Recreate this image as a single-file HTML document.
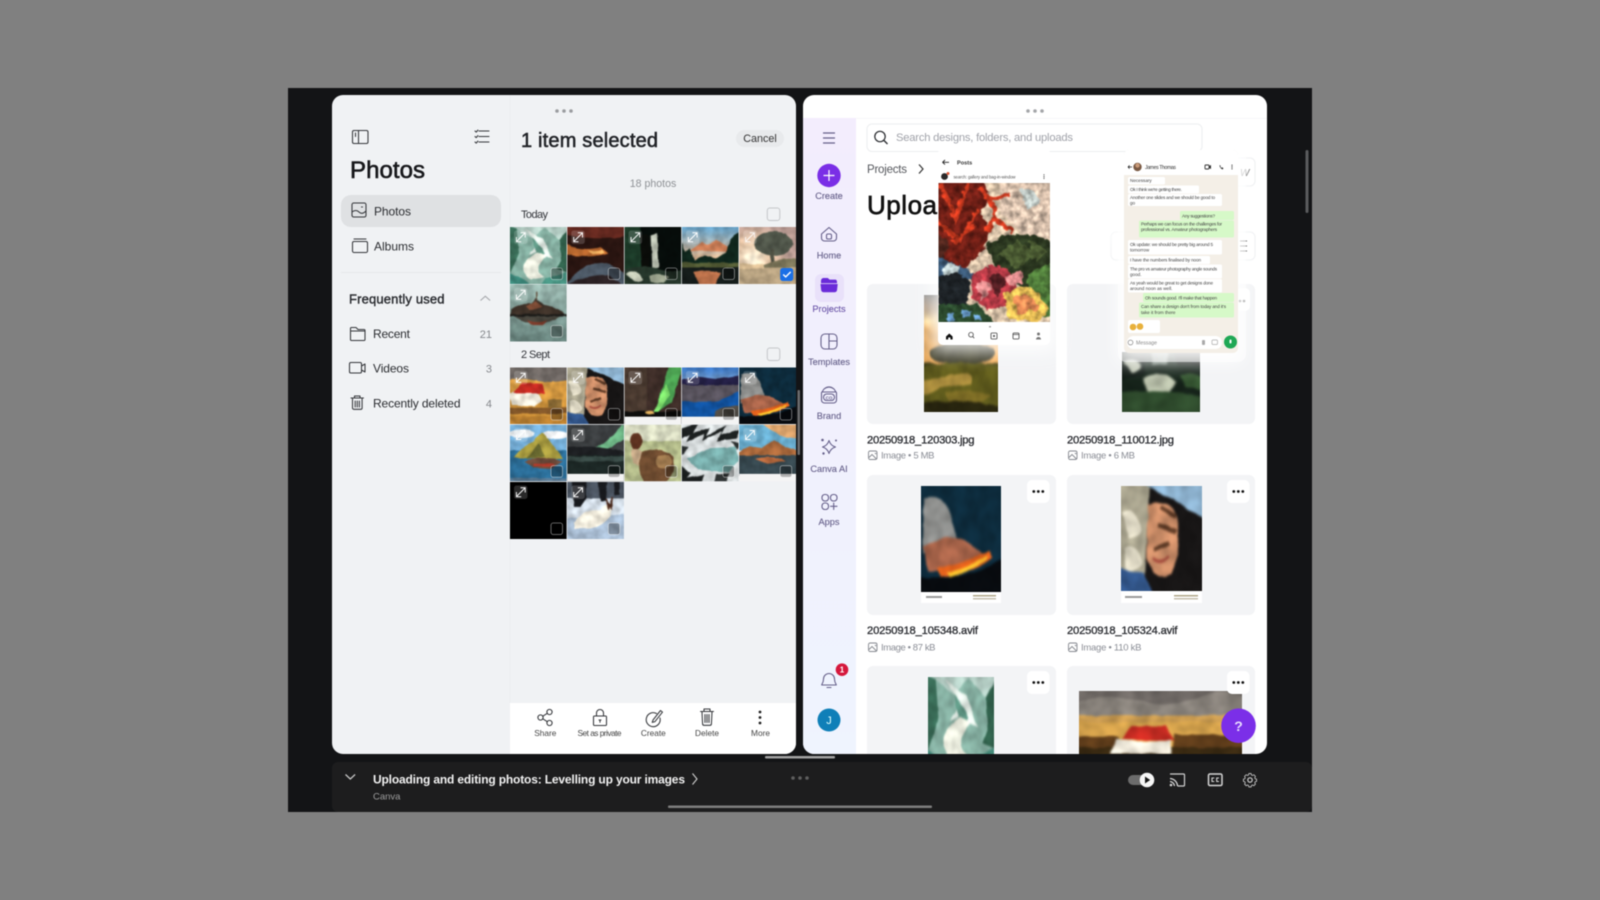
<!DOCTYPE html>
<html lang="en">
<head>
<meta charset="utf-8">
<title>Split screen: Photos and Canva</title>
<style>
html,body{margin:0;padding:0;width:1600px;height:900px;overflow:hidden;background:#808080}
svg{position:absolute;left:0;top:0;display:block;filter:blur(.4px)}
text{font-family:"Liberation Sans",sans-serif}
.t{fill:#2b2d31;font-size:12px}
.lab{font-size:9.2px;fill:#66608a;text-anchor:middle;stroke:#66608a;stroke-width:.12}
.tool{font-size:8.3px;fill:#444;text-anchor:middle}
.meta{font-size:9.5px;fill:#8b8e96}
.fn{font-size:11.2px;fill:#2c2e33;stroke:#2c2e33;stroke-width:.32}
.wa{font-size:4.6px;fill:#444}
.ic{fill:none;stroke:#35373b;stroke-width:1.05;stroke-linecap:round;stroke-linejoin:round}
.cv{fill:none;stroke:#66608a;stroke-width:1.1;stroke-linecap:round;stroke-linejoin:round}
.wh{fill:none;stroke:#d0d0d0;stroke-width:1.2;stroke-linecap:round;stroke-linejoin:round}
</style>
</head>
<body>
<svg width="1600" height="900" viewBox="0 0 1600 900" xmlns="http://www.w3.org/2000/svg">
<defs>
<filter id="s" x="-5%" y="-5%" width="110%" height="110%" color-interpolation-filters="sRGB">
<feTurbulence type="fractalNoise" baseFrequency=".07" numOctaves="2" seed="4" result="n"/>
<feDisplacementMap in="SourceGraphic" in2="n" scale="4" xChannelSelector="R" yChannelSelector="G" result="d"/>
<feColorMatrix in="n" type="matrix" values="1 0 0 0 0 1 0 0 0 0 1 0 0 0 0 0 0 0 0 1" result="g"/>
<feComposite in="d" in2="g" operator="arithmetic" k1=".45" k2=".78" k3="0" k4="0" result="t"/>
<feGaussianBlur in="t" stdDeviation="1.1"/>
</filter>
<filter id="pa" x="-5%" y="-5%" width="110%" height="110%" color-interpolation-filters="sRGB">
<feTurbulence type="fractalNoise" baseFrequency=".16" numOctaves="3" seed="9" result="n"/>
<feDisplacementMap in="SourceGraphic" in2="n" scale="7" xChannelSelector="R" yChannelSelector="G" result="d"/>
<feColorMatrix in="n" type="matrix" values="1 0 0 0 0 1 0 0 0 0 1 0 0 0 0 0 0 0 0 1" result="g"/>
<feComposite in="d" in2="g" operator="arithmetic" k1="1" k2=".5" k3="0" k4="0" result="t"/>
<feGaussianBlur in="t" stdDeviation=".45"/>
</filter>
<filter id="gl" x="-30%" y="-30%" width="160%" height="160%"><feGaussianBlur stdDeviation="9"/></filter>
<clipPath id="cl"><rect x="332" y="95" width="464" height="659" rx="11"/></clipPath>
<clipPath id="cr"><rect x="803" y="95" width="464" height="659" rx="11"/></clipPath>
<linearGradient id="side" x1="0" y1="0" x2="0" y2="1"><stop offset="0" stop-color="#f3edfd"/><stop offset="1" stop-color="#eff4fe"/></linearGradient>
<linearGradient id="sky1" x1="0" y1="0" x2="0" y2="1"><stop offset="0" stop-color="#5d9fc9"/><stop offset="1" stop-color="#e3b48a"/></linearGradient>
<radialGradient id="glowsun" cx=".25" cy=".55" r=".6"><stop offset="0" stop-color="#fff6df"/><stop offset=".5" stop-color="#e8c6a6"/><stop offset="1" stop-color="#b89a92"/></radialGradient>
<linearGradient id="fld" x1="0" y1="0" x2="0" y2="1"><stop offset="0" stop-color="#dca14a"/><stop offset="1" stop-color="#c58a33"/></linearGradient>
<linearGradient id="sky2" x1="0" y1="0" x2="0" y2="1"><stop offset="0" stop-color="#2f6fc2"/><stop offset="1" stop-color="#7fa2c8"/></linearGradient>
<linearGradient id="wat" x1="0" y1="0" x2="0" y2="1"><stop offset="0" stop-color="#9bb8b0"/><stop offset="1" stop-color="#65807a"/></linearGradient>
<linearGradient id="e2g" x1="0" y1="0" x2="0" y2="1"><stop offset="0" stop-color="#75797e"/><stop offset=".25" stop-color="#b59c82"/><stop offset=".42" stop-color="#f6d595"/><stop offset=".55" stop-color="#e8a85a"/></linearGradient>

<symbol id="a" viewBox="0 0 100 100" preserveAspectRatio="none"><g filter="url(#s)" transform="translate(-3 -3) scale(1.06)">
<rect width="100" height="100" fill="#b4cdc4"/>
<path d="M5 0L40 22 60 4 92 28 100 60 100 100 0 100 0 40Z" fill="#86b0a2"/>
<path d="M26 6L50 30 34 50 50 42 74 56 58 22Z" fill="#dce6df"/>
<path d="M40 20L62 46 48 52Z" fill="#5d9482"/>
<path d="M48 44C26 58 14 74 38 90L60 86C42 72 52 60 66 50Z" fill="#e6e8da"/>
<path d="M0 0L14 6 18 48 8 68 0 86Z" fill="#3a6d58"/>
<path d="M100 4L86 24 88 60 80 72 100 80Z" fill="#2f5d49"/>
<path d="M0 78L26 90 38 100 0 100Z" fill="#3f8c7e"/>
<path d="M62 88L100 78 100 100 52 100Z" fill="#47907f"/>
</g></symbol>

<symbol id="b" viewBox="0 0 100 100" preserveAspectRatio="none"><g filter="url(#s)" transform="translate(-3 -3) scale(1.06)">
<rect width="100" height="100" fill="#2a1511"/>
<path d="M0 0H100V18Q60 26 0 16Z" fill="#63281f"/>
<path d="M0 32Q30 44 58 36L72 46Q40 56 0 48Z" fill="#b9682f"/>
<path d="M38 42Q52 44 62 40L66 46 44 48Z" fill="#f4b262"/>
<path d="M0 100Q22 64 60 62Q88 66 100 86V100Z" fill="#4c5865"/>
<path d="M0 100Q30 82 70 82L100 100Z" fill="#2c2224"/>
</g></symbol>

<symbol id="c" viewBox="0 0 100 100" preserveAspectRatio="none"><g filter="url(#s)" transform="translate(-3 -3) scale(1.06)">
<rect width="100" height="100" fill="#060c0a"/>
<path d="M0 0H28L32 68 0 78Z" fill="#1c3a28"/>
<path d="M28 18Q40 10 46 20L44 70 32 72Z" fill="#0a0c09"/>
<path d="M47 16L57 13 60 70 49 72Z" fill="#b9bfb0"/>
<path d="M0 74Q30 64 60 72T100 74V100H0Z" fill="#25352a"/>
<path d="M4 80Q16 70 28 82T20 94Z" fill="#c8ceba"/>
<path d="M44 84Q60 76 78 86L68 96 46 94Z" fill="#9aa28c"/>
</g></symbol>

<symbol id="c2" viewBox="0 0 78 60" preserveAspectRatio="none"><g filter="url(#s)" transform="translate(-3 -3) scale(1.1)">
<rect width="78" height="60" fill="#16231a"/>
<path d="M28 0H46L44 14 30 14Z" fill="#7c8a80"/>
<path d="M0 0H24V22L0 30Z" fill="#0e1712"/>
<path d="M50 0H78V16L54 14Z" fill="#0a100c"/>
<path d="M4 12Q12 6 18 12T12 22Z" fill="#c2c8b6"/>
<path d="M22 26Q42 18 52 30L44 42 26 38Z" fill="#b8bfa9"/>
<path d="M0 40Q30 34 78 44V60H0Z" fill="#2e4a2c"/>
<path d="M56 24Q68 20 78 28V38L60 34Z" fill="#385a34"/>
</g></symbol>

<symbol id="d" viewBox="0 0 100 100" preserveAspectRatio="none"><g filter="url(#s)" transform="translate(-3 -3) scale(1.06)">
<rect width="100" height="60" fill="url(#sky1)"/>
<path d="M15 42L35 28 48 32 60 24 80 36 90 44Z" fill="#cd7f58"/>
<path d="M0 25L8 45 16 38 24 58 40 50 60 55 75 45 85 22 92 15 100 8V65H0Z" fill="#0f261c"/>
<rect y="62" width="100" height="8" fill="#525a34"/>
<rect y="70" width="100" height="30" fill="#151c1a"/>
<path d="M22 78Q45 72 68 78L58 100H32Z" fill="#b9704a"/>
</g></symbol>

<symbol id="e" viewBox="0 0 100 100" preserveAspectRatio="none"><g filter="url(#s)" transform="translate(-3 -3) scale(1.06)">
<rect width="100" height="100" fill="url(#glowsun)"/>
<ellipse cx="60" cy="30" rx="32" ry="20" fill="#50564a"/>
<rect x="55" y="40" width="7" height="24" fill="#4a4b3f"/>
<path d="M44 66Q72 52 100 56V72H44Z" fill="#7a7458"/>
<rect y="70" width="100" height="30" fill="#b5a07f"/>
<path d="M0 64H44V72H0Z" fill="#d9bd94"/>
</g></symbol>

<symbol id="e2" viewBox="0 0 100 100" preserveAspectRatio="none"><g filter="url(#s)" transform="translate(-3 -3) scale(1.06)">
<rect width="100" height="100" fill="#3f3d16"/>
<rect width="100" height="58" fill="url(#e2g)"/>
<ellipse cx="52" cy="50" rx="42" ry="9" fill="#3c3b28"/>
<path d="M0 62Q35 54 100 60V100H0Z" fill="#5e5a1c"/>
<path d="M0 72L52 66Q66 66 64 74L24 78 0 84Z" fill="#a78a3c"/>
<path d="M30 82Q60 76 88 84L70 92 36 90Z" fill="#7a6a24"/>
<path d="M0 90Q50 86 100 92V100H0Z" fill="#28250f"/>
</g></symbol>

<symbol id="f" viewBox="0 0 100 100" preserveAspectRatio="none"><g filter="url(#s)" transform="translate(-3 -3) scale(1.06)">
<rect width="100" height="100" fill="url(#wat)"/>
<path d="M4 44Q22 32 38 34L46 26 58 36Q82 40 96 54H4Z" fill="#3d3128"/>
<path d="M30 38L46 30 56 40 36 46Z" fill="#7a4a34"/>
<rect x="47" y="14" width="2.500" height="14" fill="#5a4a3a"/>
<rect y="52" width="100" height="4" fill="#1d1c19"/>
<path d="M10 56Q50 80 86 56Z" fill="#3a2e26" opacity=".8"/>
<path d="M32 62Q50 68 64 62L58 70H38Z" fill="#7a3a2a"/>
</g></symbol>

<symbol id="g" viewBox="0 0 100 100" preserveAspectRatio="none"><g filter="url(#s)" transform="translate(-3 -3) scale(1.06)">
<rect width="100" height="100" fill="url(#fld)"/>
<path d="M0 0H100V24Q70 30 40 24T0 26Z" fill="#6f6864"/>
<path d="M0 46L5 66 44 68 56 58 48 42H16Z" fill="#efe9da"/>
<path d="M8 46L22 28 56 30 62 46Z" fill="#c42b22"/>
<path d="M0 70H100V80H0Z" fill="#7e5428"/>
<rect y="84" width="100" height="16" fill="#b97f30"/>
<path d="M66 56H90V70H66Z" fill="#8a6a34"/>
</g></symbol>

<symbol id="g2" viewBox="0 0 163 90" preserveAspectRatio="none"><g filter="url(#s)" transform="translate(-4 -3) scale(1.06)">
<rect width="163" height="90" fill="#d7a44d"/>
<path d="M0 0H163V14Q120 26 60 22T0 26Z" fill="#6e6864"/>
<path d="M0 14Q30 4 60 12T118 8 163 12V24Q100 28 0 26Z" fill="#857f78"/>
<rect y="26" width="163" height="6" fill="#c89a50"/>
<path d="M0 46H40L44 62 0 70ZM94 44H163V70H92Z" fill="#5e3c1a"/>
<path d="M0 56H163V90H0Z" fill="#3a2a12"/>
<path d="M34 62L38 48 60 50 90 50 92 62Z" fill="#efe9da"/>
<path d="M44 48L52 36 86 36 94 50Z" fill="#c42b22"/>
</g></symbol>

<symbol id="h" viewBox="0 0 100 100" preserveAspectRatio="none"><g filter="url(#s)" transform="translate(-3 -3) scale(1.06)">
<rect width="100" height="100" fill="#171515"/>
<path d="M0 0H36L30 100H0Z" fill="#a9a48e"/>
<path d="M4 28Q16 20 24 34T12 50ZM6 60Q18 52 26 66T8 78Z" fill="#e2dcc7"/>
<path d="M0 76L30 82 40 100H0Z" fill="#34598f"/>
<path d="M28 0H100V32L60 14Z" fill="#8db2cf"/>
<path d="M34 20Q60 12 68 32Q74 58 62 82Q42 90 33 68Z" fill="#c98b66"/>
<path d="M46 38L68 44M42 60L60 54M50 22L66 30" stroke="#5a3824" stroke-width="4" fill="none"/>
<path d="M40 68Q50 74 58 66" stroke="#a24a3c" stroke-width="3" fill="none"/>
</g></symbol>

<symbol id="i" viewBox="0 0 100 100" preserveAspectRatio="none"><g filter="url(#s)" transform="translate(-3 -3) scale(1.06)">
<rect width="100" height="100" fill="#3c2c27"/>
<rect width="40" height="88" fill="#4a3a30"/>
<path d="M76 0L100 0 82 60 50 82 62 50Z" fill="#4da453"/>
<path d="M72 30L78 48 60 76 52 76Z" fill="#7ee06c"/>
<rect y="76" width="100" height="12" fill="#0d0d0c"/>
<ellipse cx="45" cy="78" rx="8" ry="3" fill="#e5b35f"/>
</g><rect y="87" width="100" height="13" fill="#f4f4f4"/></symbol>

<symbol id="j" viewBox="0 0 100 100" preserveAspectRatio="none"><g filter="url(#s)" transform="translate(-3 -3) scale(1.06)">
<rect width="100" height="30" fill="url(#sky2)"/>
<path d="M0 24L30 18 60 22 100 16V34H0Z" fill="#231f44"/>
<path d="M0 32H100V46L60 62 20 62 0 60Z" fill="#57525c"/>
<path d="M0 60L60 60 100 42V88H0Z" fill="#11529f"/>
<path d="M60 74Q80 64 100 68V88H56Z" fill="#4e4a44"/>
</g><rect y="87" width="100" height="13" fill="#f4f4f4"/></symbol>

<symbol id="k" viewBox="0 0 100 100" preserveAspectRatio="none"><g filter="url(#s)" transform="translate(-3 -3) scale(1.06)">
<rect width="100" height="100" fill="#0d2b3c"/>
<path d="M6 14Q28 8 36 26T44 50L30 62 4 64Z" fill="#8d8e8c"/>
<path d="M4 58Q34 42 62 54L80 68 50 80 12 78Z" fill="#a66349"/>
<path d="M22 76Q48 74 84 60L88 66Q58 82 26 84Z" fill="#e0601c"/>
<path d="M34 80Q56 76 82 64L80 68Q56 80 38 84Z" fill="#ffbe2c"/>
<path d="M0 84Q50 88 100 68V100H0Z" fill="#080b0f"/>
</g></symbol>

<symbol id="l" viewBox="0 0 100 100" preserveAspectRatio="none"><g filter="url(#s)" transform="translate(-3 -3) scale(1.06)">
<rect width="100" height="100" fill="#2b6d97"/>
<rect width="100" height="46" fill="#75aed7"/>
<ellipse cx="78" cy="20" rx="22" ry="7" fill="#f4f6f8"/>
<ellipse cx="22" cy="18" rx="22" ry="7" fill="#e8edf0"/>
<path d="M8 58L28 38 42 30 56 16 72 34 92 60Z" fill="#a79a3f"/>
<path d="M30 60L50 34 62 56Z" fill="#6a6a30"/>
<path d="M28 64Q55 52 92 64L70 76 40 74Z" fill="#6c4a3a"/>
<path d="M42 68H76V72H42Z" fill="#b03a2a"/>
<rect y="92" width="100" height="8" fill="#56748c"/>
</g></symbol>

<symbol id="m" viewBox="0 0 100 100" preserveAspectRatio="none"><g filter="url(#s)" transform="translate(-3 -3) scale(1.06)">
<rect width="100" height="100" fill="#3b3e40"/>
<path d="M44 42Q72 34 96 0L100 26 68 44Z" fill="#6fb787"/>
<path d="M0 40Q50 36 100 48V56H0Z" fill="#1d1f22"/>
<rect y="54" width="100" height="34" fill="#1c2725"/>
<path d="M0 56H100V64H0Z" fill="#384945"/>
</g><rect y="87" width="100" height="13" fill="#f4f4f4"/></symbol>

<symbol id="n" viewBox="0 0 100 100" preserveAspectRatio="none"><g filter="url(#s)" transform="translate(-3 -3) scale(1.06)">
<rect width="100" height="100" fill="#b3bb8a"/>
<rect width="100" height="30" fill="#d6d9c0"/>
<path d="M30 50Q60 35 84 56Q90 84 70 100H36Q22 80 30 50Z" fill="#6c4a2f"/>
<ellipse cx="22" cy="30" rx="10" ry="14" fill="#5d3220"/>
<path d="M14 44Q24 42 32 48L26 72 16 66Z" fill="#c1a584"/>
<ellipse cx="68" cy="64" rx="14" ry="11" fill="#a27c50"/>
</g></symbol>

<symbol id="o" viewBox="0 0 100 100" preserveAspectRatio="none"><g filter="url(#s)" transform="translate(-3 -3) scale(1.06)">
<rect width="100" height="100" fill="#d5dadb"/>
<path d="M0 10L30 0 22 16 50 8 44 22 76 4 68 20 100 10 94 26 60 30 70 14 36 30 40 18 10 32 16 20 0 28Z" fill="#1c2020"/>
<path d="M10 60L50 42 92 40 100 62 80 82 30 78Z" fill="#76aaa8"/>
<path d="M0 70L18 84 10 92 40 86 36 100 0 100Z" fill="#1c2020"/>
<path d="M60 86L82 84 76 100 56 100Z" fill="#2c3030"/>
<path d="M0 38L14 40 6 52 0 54ZM84 30L100 34 96 46Z" fill="#2a2e2e"/>
</g></symbol>

<symbol id="p" viewBox="0 0 100 100" preserveAspectRatio="none"><g filter="url(#s)" transform="translate(-3 -3) scale(1.06)">
<rect width="100" height="46" fill="#68abcc"/>
<path d="M40 0H100V26L70 22Z" fill="#d9a26b"/>
<path d="M0 50L20 38 40 42 60 28 80 40 100 46V56H0Z" fill="#a9683b"/>
<rect y="54" width="100" height="34" fill="#36474e"/>
<path d="M30 60Q60 52 80 64L50 68Z" fill="#b5683d"/>
</g><rect y="87" width="100" height="13" fill="#f4f4f4"/></symbol>

<symbol id="q" viewBox="0 0 100 100" preserveAspectRatio="none"><g filter="url(#s)" transform="translate(-3 -3) scale(1.06)">
<rect width="100" height="100" fill="#a9bdd3"/>
<rect width="100" height="32" fill="#49525e"/>
<path d="M0 30H100V56L0 64Z" fill="#d4dee8"/>
<path d="M10 0H34V30L24 44H14ZM54 0H70L66 34H58ZM80 0H90V24H82Z" fill="#181a1e"/>
<path d="M14 70Q30 46 58 50Q66 36 76 44L74 60Q62 76 40 80H16Z" fill="#eee9da"/>
<path d="M66 30L72 46 78 28 76 46Z" fill="#4d2a1c" stroke="#4d2a1c" stroke-width="2"/>
</g></symbol>

<symbol id="paint" viewBox="0 0 112 139" preserveAspectRatio="none"><g filter="url(#pa)" transform="translate(-4 -4) scale(1.06)">
<rect width="112" height="139" fill="#d8c2a8"/>
<path d="M62 0H112V60L82 50 62 30Z" fill="#d8c0ac"/>
<path d="M80 10Q95 4 100 22L88 30Z" fill="#b9c2be"/>
<path d="M0 0H44Q58 14 42 34Q58 44 46 66L26 88 0 84Z" fill="#6e1f16"/>
<path d="M6 4L20 38 32 4M2 40L24 58 42 28M18 60L38 44M44 8L58 30 50 50M50 20L72 14M54 36L74 50" stroke="#c8391f" stroke-width="4" fill="none"/>
<path d="M0 50L14 60 6 82 0 84Z" fill="#54281f"/>
<path d="M48 62Q78 42 112 60V118L90 108 60 88Z" fill="#2b3720"/>
<path d="M60 70L80 58 98 72 78 84ZM90 58L108 68 96 80Z" fill="#4a5a32"/>
<path d="M88 90L112 78V130H92Z" fill="#4f7a3a"/>
<path d="M0 72L30 84 40 92 14 106 0 100Z" fill="#3c5a78"/>
<path d="M12 78L24 82 20 92 8 90Z" fill="#b9c8c9"/>
<path d="M2 92Q22 84 34 98L30 122 4 118Z" fill="#1e2327"/>
<path d="M34 92Q60 70 76 94L78 116 50 124 36 112Z" fill="#b53b46"/>
<path d="M50 94Q60 84 68 96L60 112Z" fill="#562024"/>
<path d="M40 98Q50 92 54 104L44 114ZM66 92L82 86 84 98 72 100Z" fill="#dd8c8c"/>
<path d="M66 108Q92 92 108 122L98 136 70 132Z" fill="#e4bb55"/>
<path d="M74 112Q88 102 100 122L78 128Z" fill="#e38a55"/>
<path d="M0 118L40 118 60 139H0Z" fill="#2c4a2e"/>
<path d="M26 122l8 2 0 6-8 1zM12 126l6 1 0 6-6 0zM38 128l6 0 0 5-6 0z" fill="#6b9fcf"/>
</g></symbol>

<g id="ov">
<rect x="4" y="3.500" width="13.500" height="13.500" rx="2.500" fill="#fff" opacity=".16"/>
<path d="M6.500 14.500L15 6M10.500 5.800H15.200V10.500M6.400 10v4.800h4.800" fill="none" stroke="#fff" stroke-width="1" opacity=".95"/>
<rect x="41" y="41" width="11.500" height="11.500" rx="2.200" fill="#000" fill-opacity=".28" stroke="#fff" stroke-opacity=".5" stroke-width=".8"/>
</g>
<g id="ov2">
<rect x="41" y="41" width="11.500" height="11.500" rx="2.200" fill="#000" fill-opacity=".28" stroke="#fff" stroke-opacity=".5" stroke-width=".8"/>
</g>
<g id="dots3"><rect width="22.500" height="23" rx="5" fill="#fff"/><circle cx="6.800" cy="11.500" r="1.400" fill="#111"/><circle cx="11.300" cy="11.500" r="1.400" fill="#111"/><circle cx="15.800" cy="11.500" r="1.400" fill="#111"/></g>
<g id="imgic"><rect x=".5" y=".5" width="8.500" height="8.500" rx="1.600" fill="none" stroke="#85888f" stroke-width=".9"/><path d="M1 7l3-3 4.500 4.500M6.800 2.800h1v1" fill="none" stroke="#85888f" stroke-width=".9"/></g>
</defs>

<!-- frame -->
<rect width="1600" height="900" fill="#808080"/>
<rect x="288" y="88" width="1024" height="724" fill="#131416"/>
<rect x="332" y="762" width="980" height="50" rx="6" fill="#1d1d1e"/>

<!-- LEFT PANEL -->
<g clip-path="url(#cl)">
<rect x="332" y="95" width="464" height="659" fill="#f0f2f4"/>
<rect x="510" y="703" width="286" height="51" fill="#fff"/>
<rect x="509.500" y="95" width=".6" height="608" fill="#e9ebed"/>

<path class="ic" d="M352.500 132a1.500 1.500 0 0 1 1.500-1.500h12.500a1.500 1.500 0 0 1 1.500 1.500v10a1.500 1.500 0 0 1-1.500 1.500H354a1.500 1.500 0 0 1-1.500-1.500zM358.500 130.500v13M355.500 133v3.500"/>
<path class="ic" d="M479 131h10M479 136.500h10M479 142h10M475 131l1.200 1.100 1.700-2M475 136.500l1.200 1.100 1.700-2M475 142l1.200 1.100 1.700-2"/>
<text x="350" y="178" font-size="24" fill="#17181b" stroke="#17181b" stroke-width=".6" textLength="75">Photos</text>

<rect x="341" y="195" width="160" height="32" rx="10" fill="#dfe1e3"/>
<rect x="352" y="203" width="14" height="14" rx="1.600" class="ic"/>
<path class="ic" d="M352 212q4-3 7 0t7-1M361.500 207h1"/>
<text x="374" y="215.300" class="t" textLength="37">Photos</text>
<path class="ic" d="M354 239h12M352.500 243a1.500 1.500 0 0 1 1.500-1.500h12a1.500 1.500 0 0 1 1.500 1.500v8a1.500 1.500 0 0 1-1.500 1.500h-12a1.500 1.500 0 0 1-1.500-1.500z"/>
<text x="374" y="250.300" class="t" textLength="40">Albums</text>
<rect x="341" y="272" width="160" height="1" fill="#e6e8ea"/>

<text x="349" y="303.500" font-size="13" fill="#2a2c30" stroke="#2a2c30" stroke-width=".4" textLength="95.500">Frequently used</text>
<path d="M480.500 300.500l4.800-4.300 4.800 4.300" fill="none" stroke="#a6a8ac" stroke-width="1.100"/>

<path class="ic" d="M350.500 330v-1.500a1 1 0 0 1 1-1h4.500l2 2h6a1 1 0 0 1 1 1v9a1 1 0 0 1-1 1h-12.500a1 1 0 0 1-1-1zM350.500 331h14.500"/>
<text x="373" y="338.200" class="t" textLength="37">Recent</text>
<text x="492" y="338.200" font-size="11" fill="#85888c" text-anchor="end">21</text>

<rect x="349.500" y="362.500" width="12" height="10.500" rx="1.400" class="ic"/>
<path class="ic" d="M361.500 366l3.500-2v8l-3.500-2"/>
<text x="373" y="372.400" class="t" textLength="36">Videos</text>
<text x="492" y="372.400" font-size="11" fill="#85888c" text-anchor="end">3</text>

<path class="ic" d="M351 398h12.500M354.500 397.500v-1.500h5.500v1.500M352.500 398.500v9.500a1.300 1.300 0 0 0 1.300 1.300h7a1.300 1.300 0 0 0 1.300-1.300v-9.500M355.200 401v6M357.300 401v6M359.400 401v6"/>
<text x="373" y="407.300" class="t" textLength="87.500">Recently deleted</text>
<text x="492" y="407.300" font-size="11" fill="#85888c" text-anchor="end">4</text>

<circle cx="557" cy="111" r="1.800" fill="#9a9c9f"/><circle cx="564" cy="111" r="1.800" fill="#9a9c9f"/><circle cx="571" cy="111" r="1.800" fill="#9a9c9f"/>
<text x="521" y="146.800" font-size="20" fill="#222428" stroke="#222428" stroke-width=".55" textLength="137">1 item selected</text>
<rect x="736" y="130" width="48" height="17" rx="8.500" fill="#e8eaec"/>
<text x="760" y="142" font-size="10.800" fill="#333" text-anchor="middle">Cancel</text>
<text x="653" y="186.800" font-size="10.600" fill="#8f9296" text-anchor="middle">18 photos</text>
<text x="521" y="217.800" font-size="11" fill="#33353a" textLength="27">Today</text>
<rect x="767.300" y="208" width="12.500" height="12.500" rx="2.500" fill="none" stroke="#c4c6c9" stroke-width="1"/>
<text x="521" y="358" font-size="11" fill="#33353a" textLength="29">2 Sept</text>
<rect x="767.300" y="348" width="12.500" height="12.500" rx="2.500" fill="none" stroke="#c4c6c9" stroke-width="1"/>

<use href="#a" x="510" y="227" width="56.600" height="57"/>
<use href="#b" x="567.300" y="227" width="56.600" height="57"/>
<use href="#c" x="624.600" y="227" width="56.600" height="57"/>
<use href="#d" x="681.900" y="227" width="56.600" height="57"/>
<use href="#e" x="739.200" y="227" width="56.800" height="57"/>
<use href="#f" x="510" y="284.500" width="56.600" height="57"/>
<use href="#g" x="510" y="367.500" width="56.600" height="56.500"/>
<use href="#h" x="567.300" y="367.500" width="56.600" height="56.500"/>
<use href="#i" x="624.600" y="367.500" width="56.600" height="56.500"/>
<use href="#j" x="681.900" y="367.500" width="56.600" height="56.500"/>
<use href="#k" x="739.200" y="367.500" width="56.800" height="56.500"/>
<use href="#l" x="510" y="424.700" width="56.600" height="56.500"/>
<use href="#m" x="567.300" y="424.700" width="56.600" height="56.500"/>
<use href="#n" x="624.600" y="424.700" width="56.600" height="56.500"/>
<use href="#o" x="681.900" y="424.700" width="56.600" height="56.500"/>
<use href="#p" x="739.200" y="424.700" width="56.800" height="56.500"/>
<rect x="510" y="482" width="56.600" height="57" fill="#000"/>
<use href="#q" x="567.300" y="482" width="56.600" height="57"/>

<use href="#ov" x="510" y="227"/><use href="#ov" x="567.300" y="227"/><use href="#ov" x="624.600" y="227"/><use href="#ov" x="681.900" y="227"/>
<g transform="translate(739.200 227)"><rect x="4" y="3.500" width="13.500" height="13.500" rx="2.500" fill="#fff" opacity=".16"/><path d="M6.500 14.500L15 6M10.500 5.800H15.200V10.500M6.400 10v4.800h4.800" fill="none" stroke="#fff" stroke-width="1" opacity=".8"/>
<rect x="41" y="41" width="13" height="13" rx="2.600" fill="#1a6fe6"/><path d="M44 47.500l2.500 2.400 5-5" fill="none" stroke="#fff" stroke-width="1.400"/></g>
<use href="#ov" x="510" y="284.500"/>
<use href="#ov" x="510" y="367.500"/><use href="#ov" x="567.300" y="367.500"/><use href="#ov" x="624.600" y="367.500"/><use href="#ov" x="681.900" y="367.500"/><use href="#ov" x="739.200" y="367.500"/>
<use href="#ov" x="510" y="424.700"/><use href="#ov" x="567.300" y="424.700"/><use href="#ov2" x="624.600" y="424.700"/><use href="#ov2" x="681.900" y="424.700"/><use href="#ov" x="739.200" y="424.700"/>
<use href="#ov" x="510" y="482"/><use href="#ov" x="567.300" y="482"/>

<!-- bottom toolbar -->
<g class="ic">
<circle cx="549.500" cy="712" r="2.600"/><circle cx="540.500" cy="717.500" r="2.600"/><circle cx="549.500" cy="723" r="2.600"/><path d="M542.800 716.200l4.500-2.900M542.800 718.800l4.500 2.900"/>
<rect x="593.500" y="716" width="13" height="9.500" rx="1"/><path d="M596.500 716v-3a3.500 3.500 0 0 1 7 0v3"/><path d="M600 720v2.200M599 720h2"/>
<path d="M656.500 713.500a7 7 0 1 0 3.500 4.500M653 720l7.500-9.500 2 1.600-7.500 9.500-2.800.8z"/>
<path d="M700.500 711.500h13M704 711v-2h6v2M702 712l.6 12a1.500 1.500 0 0 0 1.500 1.300h5.800a1.500 1.500 0 0 0 1.500-1.300l.6-12M705 714.500v8M707 714.500v8M709 714.500v8"/>
</g>
<circle cx="760" cy="712" r="1.400" fill="#222"/><circle cx="760" cy="717.500" r="1.400" fill="#222"/><circle cx="760" cy="723" r="1.400" fill="#222"/>
<text x="545.300" y="736" class="tool">Share</text>
<text x="599.500" y="736" class="tool" textLength="44">Set as private</text>
<text x="653.300" y="736" class="tool">Create</text>
<text x="707" y="736" class="tool">Delete</text>
<text x="760.500" y="736" class="tool">More</text>
</g>

<!-- RIGHT PANEL -->
<g clip-path="url(#cr)">
<rect x="803" y="95" width="464" height="659" fill="#fff"/>
<rect x="803" y="118" width="53" height="636" fill="url(#side)"/>
<rect x="856" y="118" width="411" height=".6" fill="#f3f3f5"/>
<circle cx="1028" cy="111" r="1.800" fill="#a3a5a8"/><circle cx="1035" cy="111" r="1.800" fill="#a3a5a8"/><circle cx="1042" cy="111" r="1.800" fill="#a3a5a8"/>

<!-- sidebar -->
<path d="M823 133h12M823 138h12M823 143h12" stroke="#66608a" stroke-width="1.200" fill="none"/>
<circle cx="829" cy="175.500" r="11.700" fill="#7a2ee6"/>
<path d="M829 170v11M823.500 175.500h11" stroke="#fff" stroke-width="1.200"/>
<text x="829" y="199" class="lab">Create</text>
<path class="cv" d="M821.500 234l7.500-6.500 7.500 6.500v4a3 3 0 0 1-3 3h-9a3 3 0 0 1-3-3z"/><rect x="826.500" y="234" width="5" height="5" rx="1.400" class="cv"/>
<text x="829" y="258.500" class="lab">Home</text>
<rect x="815" y="274" width="29" height="28" rx="6" fill="#e9e1fa"/>
<path d="M821 281.500c0-2.500 1-3.500 2.800-3.500h4l1.800 1.600h5.400c1.600 0 2 1 2 2.600v1H821z" fill="#6a2bd9"/>
<path d="M820.500 284h17.200l-.7 6.300c-.2 1.200-1 1.900-2.200 1.900h-11.400c-1.200 0-2-.7-2.200-1.900z" fill="#6a2bd9"/>
<text x="829" y="312" class="lab" style="fill:#6a4fb0">Projects</text>
<path class="cv" d="M825 334h8a4 4 0 0 1 4 4v7a4 4 0 0 1-4 4h-8a4 4 0 0 1-4-4v-7a4 4 0 0 1 4-4zM829 334v15M829 341h8"/>
<text x="829" y="365" class="lab">Templates</text>
<path class="cv" d="M824 389q5-4 10 0l2 3h-14zM821.500 393a1 1 0 0 1 1-1h13a1 1 0 0 1 1 1v7a3 3 0 0 1-3 3h-9a3 3 0 0 1-3-3z"/><rect x="823.500" y="394" width="11" height="6.500" rx="3.200" class="cv"/>
<text x="829" y="399.300" font-size="4.500" fill="#66608a" text-anchor="middle" font-weight="bold">CO</text>
<text x="829" y="419" class="lab">Brand</text>
<path class="cv" d="M829 440.500c1 3.500 3 5.500 6.500 6.500-3.500 1-5.500 3-6.500 6.500-1-3.500-3-5.500-6.500-6.500 3.500-1 5.500-3 6.500-6.500z"/>
<circle cx="822.500" cy="440" r="1.300" fill="#66608a"/><circle cx="836" cy="440.500" r="1" fill="#66608a"/><circle cx="823.500" cy="453.500" r="1.200" fill="#66608a"/>
<text x="829" y="472" class="lab">Canva AI</text>
<rect x="822" y="494.500" width="6.500" height="6.500" rx="2.800" class="cv"/><rect x="830.500" y="494.500" width="6.500" height="6.500" rx="2.800" class="cv"/><rect x="822" y="503" width="6.500" height="6.500" rx="2.800" class="cv"/><path class="cv" d="M833.700 503v6.500M830.500 506.300h6.500"/>
<text x="829" y="525" class="lab">Apps</text>
<path class="cv" d="M829 673.500a5.500 5.500 0 0 0-5.500 5.500c0 4-1.800 5-1.800 6h14.600c0-1-1.800-2-1.800-6a5.500 5.500 0 0 0-5.500-5.500zM827 687.500h4"/>
<circle cx="842" cy="669.700" r="6.300" fill="#d5173c"/>
<text x="842" y="672.700" font-size="8" fill="#fff" text-anchor="middle" font-weight="bold">1</text>
<circle cx="829" cy="720" r="11.500" fill="#0f7fb8"/>
<text x="829" y="724" font-size="11" fill="#dff" text-anchor="middle">J</text>

<!-- hidden right-side controls behind overlays -->
<rect x="1230" y="158" width="25" height="28" rx="5" fill="#fff" stroke="#edeff1"/>
<text x="1240" y="176" font-size="10" font-style="italic" fill="#666">W</text>
<rect x="1111" y="232" width="144" height="28" rx="5" fill="#fff" stroke="#eef0f2"/>
<path d="M1240 241h7M1240 246h7M1240 251h7" stroke="#333" stroke-width="1"/>

<!-- cards -->
<rect x="867" y="284" width="189" height="140" rx="6" fill="#f3f4f6"/>
<rect x="1067" y="284" width="188" height="140" rx="6" fill="#f3f4f6"/>
<use href="#e2" x="924" y="295" width="74" height="117"/>
<use href="#c2" x="1122" y="352" width="78" height="60"/>
<rect x="1236" y="288" width="14" height="23" rx="5" fill="#fff"/>
<circle cx="1240" cy="301" r="1.300" fill="#222"/><circle cx="1244" cy="301" r="1.300" fill="#222"/>
<text x="867" y="443.500" class="fn" textLength="107.500">20250918_120303.jpg</text>
<use href="#imgic" x="868" y="450.500"/>
<text x="881" y="458.500" class="meta" textLength="53.500">Image • 5 MB</text>
<text x="1067" y="443.500" class="fn" textLength="107">20250918_110012.jpg</text>
<use href="#imgic" x="1068" y="450.500"/>
<text x="1081" y="458.500" class="meta" textLength="54">Image • 6 MB</text>

<rect x="867" y="475" width="189" height="140" rx="6" fill="#f3f4f6"/>
<rect x="1067" y="475" width="188" height="140" rx="6" fill="#f3f4f6"/>
<rect x="921" y="486" width="80" height="117" fill="#fff"/>
<use href="#k" x="921" y="486" width="80" height="106"/>
<rect x="1121" y="486" width="81" height="117" fill="#fff"/>
<use href="#h" x="1121" y="486" width="81" height="105"/>
<rect x="926" y="596" width="16" height="2" fill="#9a9a9a"/><rect x="973" y="595" width="23" height="1.500" fill="#b0a78a"/><rect x="973" y="598" width="23" height="1.500" fill="#c5bfae"/>
<rect x="1125" y="596" width="17" height="2" fill="#9a9a9a"/><rect x="1174" y="595" width="24" height="1.500" fill="#b0a78a"/><rect x="1174" y="598" width="24" height="1.500" fill="#c5bfae"/>
<use href="#dots3" x="1027" y="480"/><use href="#dots3" x="1227" y="480"/>
<text x="867" y="634" class="fn" textLength="111">20250918_105348.avif</text>
<use href="#imgic" x="868" y="642.500"/>
<text x="881" y="650.500" class="meta" textLength="54.500">Image • 87 kB</text>
<text x="1067" y="634" class="fn" textLength="110.500">20250918_105324.avif</text>
<use href="#imgic" x="1068" y="642.500"/>
<text x="1081" y="650.500" class="meta" textLength="60.500">Image • 110 kB</text>

<rect x="867" y="666" width="189" height="100" rx="6" fill="#f3f4f6"/>
<rect x="1067" y="666" width="188" height="100" rx="6" fill="#f3f4f6"/>
<use href="#a" x="928" y="677" width="66" height="90"/>
<use href="#g2" x="1079" y="691" width="163" height="90"/>
<use href="#dots3" x="1027" y="671"/><use href="#dots3" x="1227" y="671"/>

<!-- glows behind floating windows -->
<rect x="932" y="150" width="124" height="202" fill="#fff" filter="url(#gl)" opacity=".85"/>
<rect x="1118" y="152" width="124" height="210" fill="#fff" filter="url(#gl)" opacity=".9"/>
<rect x="1010" y="160" width="130" height="90" fill="#fff" opacity=".45" filter="url(#gl)"/>
<rect x="1118" y="146" width="128" height="216" rx="8" fill="#fff" opacity=".55"/>

<!-- search + header above glows -->
<rect x="867" y="124" width="335" height="27.500" rx="5" fill="#fff" stroke="#eceef0"/>
<circle cx="880" cy="136.500" r="5.200" fill="none" stroke="#26282c" stroke-width="1.200"/><path d="M884 140.500l3.500 3.500" stroke="#26282c" stroke-width="1.300"/>
<text x="896" y="141" font-size="11.200" fill="#a0a2a9" textLength="177">Search designs, folders, and uploads</text>
<text x="867" y="173" font-size="11.500" fill="#55575c" textLength="40">Projects</text>
<path d="M919 164.500l4 4.500-4 4.500" fill="none" stroke="#333" stroke-width="1.200"/>
<text x="867" y="214" font-size="26" fill="#111" stroke="#111" stroke-width=".65" textLength="85">Upload</text>

<!-- Posts floating window -->
<rect x="938" y="148" width="112" height="197" rx="5" fill="#fff"/>
<path d="M942.500 162.300h6.500M942.500 162.300l2.500-2.300M942.500 162.300l2.500 2.300" stroke="#222" stroke-width=".9" fill="none"/>
<text x="957" y="164.300" font-size="5.600" font-weight="bold" fill="#333">Posts</text>
<circle cx="944.500" cy="176.500" r="3.400" fill="#2c2a2a"/><circle cx="948" cy="173.500" r="1.500" fill="#d85a3c"/>
<text x="953.500" y="178.300" font-size="4.300" fill="#555" textLength="62">search: gallery and bag-in-window</text>
<circle cx="1044" cy="174.800" r=".6" fill="#555"/><circle cx="1044" cy="176.600" r=".6" fill="#555"/><circle cx="1044" cy="178.400" r=".6" fill="#555"/>
<use href="#paint" x="938.500" y="183" width="111.500" height="139"/>
<rect x="989" y="326" width="2" height="1.500" fill="#aaa"/>
<path d="M946 336.500l3.300-3 3.300 3v3h-2.200v-2h-2.200v2H946z" fill="#111"/>
<circle cx="971" cy="334.700" r="2.300" fill="none" stroke="#444" stroke-width=".8"/><path d="M972.600 336.400l1.600 1.800" stroke="#444" stroke-width=".8"/>
<rect x="991" y="333" width="6" height="6" rx="1" fill="none" stroke="#444" stroke-width=".8"/><circle cx="994" cy="336" r="1" fill="#444"/>
<rect x="1013" y="333" width="6" height="6" rx="1" fill="none" stroke="#444" stroke-width=".8"/><path d="M1013 334.500h6" stroke="#444" stroke-width=".8"/>
<circle cx="1038.500" cy="334" r="1.500" fill="#777"/><path d="M1036 339.500a2.500 2.500 0 0 1 5 0z" fill="#777"/>

<!-- WhatsApp floating window -->
<rect x="1124" y="150" width="114" height="203" rx="5" fill="#f4efe7"/>
<path d="M1124 175v-20a5 5 0 0 1 5-5h104a5 5 0 0 1 5 5v20z" fill="#fff"/>
<path d="M1128 167h4M1128 167l1.600-1.600M1128 167l1.600 1.600" stroke="#222" stroke-width=".8" fill="none"/>
<circle cx="1137.500" cy="167" r="4.200" fill="#7a5a44"/><circle cx="1137.500" cy="165.500" r="2.200" fill="#c99a78"/>
<text x="1145" y="169" font-size="5.200" fill="#333" textLength="31">James Thomas</text>
<rect x="1205" y="165" width="4" height="4" rx=".6" fill="none" stroke="#333" stroke-width=".9"/><path d="M1209 166l2-1v4l-2-1z" fill="#333"/>
<path d="M1219.500 165q0 3 3 4.500l1-1.200-1.400-1-.7.600-1-1 .4-1z" fill="#333"/>
<circle cx="1232" cy="165.200" r=".6" fill="#333"/><circle cx="1232" cy="167" r=".6" fill="#333"/><circle cx="1232" cy="168.800" r=".6" fill="#333"/>

<g fill="#fff">
<rect x="1128" y="177" width="37" height="7.500" rx="1.500"/>
<rect x="1128" y="185.500" width="71" height="8" rx="1.500"/>
<rect x="1128" y="194" width="94" height="12" rx="1.500"/>
<rect x="1128" y="240" width="94" height="14.500" rx="1.500"/>
<rect x="1128" y="256" width="82" height="8" rx="1.500"/>
<rect x="1128" y="264.500" width="94" height="14" rx="1.500"/>
<rect x="1128" y="279" width="94" height="13.500" rx="1.500"/>
<rect x="1128" y="320" width="32" height="13" rx="2"/>
<rect x="1127" y="336" width="95" height="13" rx="6.500"/>
</g>
<g fill="#d6f9c8">
<rect x="1180" y="211" width="54" height="9" rx="1.500"/>
<rect x="1139" y="220.500" width="95" height="17" rx="1.500"/>
<rect x="1143" y="293" width="91" height="9" rx="1.500"/>
<rect x="1139" y="302.500" width="95" height="15" rx="1.500"/>
</g>
<text x="1130" y="182" class="wa">Necessary</text>
<text x="1130" y="191" class="wa" textLength="52">Ok I think we're getting there.</text>
<text x="1130" y="199" class="wa" textLength="85">Another one slides and we should be good to</text>
<text x="1130" y="204.500" class="wa">go</text>
<text x="1182" y="217.500" class="wa" textLength="33">Any suggestions?</text>
<text x="1141" y="225.500" class="wa" textLength="81">Perhaps we can focus on the challenges for</text>
<text x="1141" y="231" class="wa" textLength="76">professional vs. Amateur photographers</text>
<text x="1130" y="246" class="wa" textLength="83">Ok update: we should be pretty big around 5</text>
<text x="1130" y="251.500" class="wa">tomorrow</text>
<text x="1130" y="261.500" class="wa" textLength="71">I have the numbers finalised by noon</text>
<text x="1130" y="270.500" class="wa" textLength="87">The pro vs amateur photography angle sounds</text>
<text x="1130" y="276" class="wa">good.</text>
<text x="1130" y="284.500" class="wa" textLength="83">As yeah would be great to get designs done</text>
<text x="1130" y="290" class="wa">around noon as well.</text>
<text x="1145" y="299.500" class="wa" textLength="72">Oh sounds good. I'll make that happen</text>
<text x="1141" y="308" class="wa" textLength="85">Can share a design don't from today and it's</text>
<text x="1141" y="314" class="wa">take it from there</text>
<circle cx="1133" cy="327" r="3.300" fill="#e8b13c"/><circle cx="1140" cy="326.500" r="3.300" fill="#e8b13c"/>
<circle cx="1130.500" cy="342.500" r="2.400" fill="none" stroke="#888" stroke-width=".7"/>
<text x="1136" y="344.500" font-size="5.200" fill="#888">Message</text>
<rect x="1202" y="340" width="3" height="5" rx="1" fill="#aaa"/>
<rect x="1212" y="340" width="5.500" height="4.500" rx="1" fill="none" stroke="#aaa" stroke-width=".7"/>
<circle cx="1230.500" cy="342" r="6.500" fill="#1fa855"/><rect x="1229.500" y="339.500" width="2" height="4" rx="1" fill="#fff"/>

<!-- help -->
<circle cx="1238.500" cy="725.700" r="17.300" fill="#7b2fe8"/>
<text x="1238.500" y="731" font-size="14" font-weight="bold" fill="#e8dcff" text-anchor="middle">?</text>
</g>

<!-- scrollbars and handles -->
<rect x="797.500" y="390" width="2.500" height="65" rx="1" fill="#6b6c6e"/>
<rect x="1305.500" y="150" width="3" height="63" rx="1.500" fill="#5a5b5d"/>
<rect x="765" y="756" width="70" height="2.500" rx="1" fill="#a2a2a2"/>
<rect x="668" y="805.500" width="264" height="2.500" rx="1" fill="#7d7d7d"/>

<!-- player bar -->
<path d="M345.500 774.500l4.800 4.500 4.800-4.500" fill="none" stroke="#c9c9c9" stroke-width="1.200"/>
<text x="373" y="783.500" font-size="12" font-weight="bold" fill="#f2f2f2" textLength="312">Uploading and editing photos: Levelling up your images</text>
<path d="M692.500 773.500l4.500 5.500-4.500 5.500" fill="none" stroke="#cfcfcf" stroke-width="1.100"/>
<text x="373" y="799.500" font-size="9.500" fill="#9d9d9d">Canva</text>
<circle cx="793" cy="778" r="1.800" fill="#5f5f5f"/><circle cx="800" cy="778" r="1.800" fill="#5f5f5f"/><circle cx="807" cy="778" r="1.800" fill="#5f5f5f"/>

<rect x="1128" y="775" width="23" height="10" rx="5" fill="#6c6c6c"/>
<circle cx="1147" cy="780" r="7.300" fill="#f6f6f6"/>
<path d="M1145 776.500l5.200 3.500-5.200 3.500z" fill="#151515"/>
<path class="wh" d="M1170.500 774h13a1 1 0 0 1 1 1v10a1 1 0 0 1-1 1h-5.500"/>
<path d="M1170 778.500a8 8 0 0 1 7.500 7.500M1170 781.500a5 5 0 0 1 4.500 4.500" fill="none" stroke="#d8d8d8" stroke-width="1.300"/><circle cx="1171" cy="785" r="1.300" fill="#d8d8d8"/>
<rect x="1208.500" y="774" width="13.500" height="11.500" rx="1.400" fill="none" stroke="#d5d5d5" stroke-width="1.500"/>
<path d="M1214.300 778h-2.300v3.500h2.300M1219 778h-2.300v3.500h2.300" fill="none" stroke="#d5d5d5" stroke-width="1.100"/>
<path class="wh" d="M1248.300 773h3.400l.5 2.100 1.500.7 2-1 2.300 2.400-1 1.900.6 1.500 2.100.6v3.300l-2.100.6-.6 1.500 1 1.900-2.300 2.400-2-1-1.500.7-.5 2.100h-3.400l-.5-2.100-1.500-.7-2 1-2.300-2.400 1-1.900-.6-1.500-2.100-.6v-3.300l2.100-.6.6-1.500-1-1.900 2.300-2.400 2 1 1.500-.7z" transform="translate(1250 780) scale(.68) translate(-1250 -782.500)" stroke-width="1.600"/>
<circle cx="1250" cy="780" r="2.200" class="wh"/>
</svg>
</body>
</html>
